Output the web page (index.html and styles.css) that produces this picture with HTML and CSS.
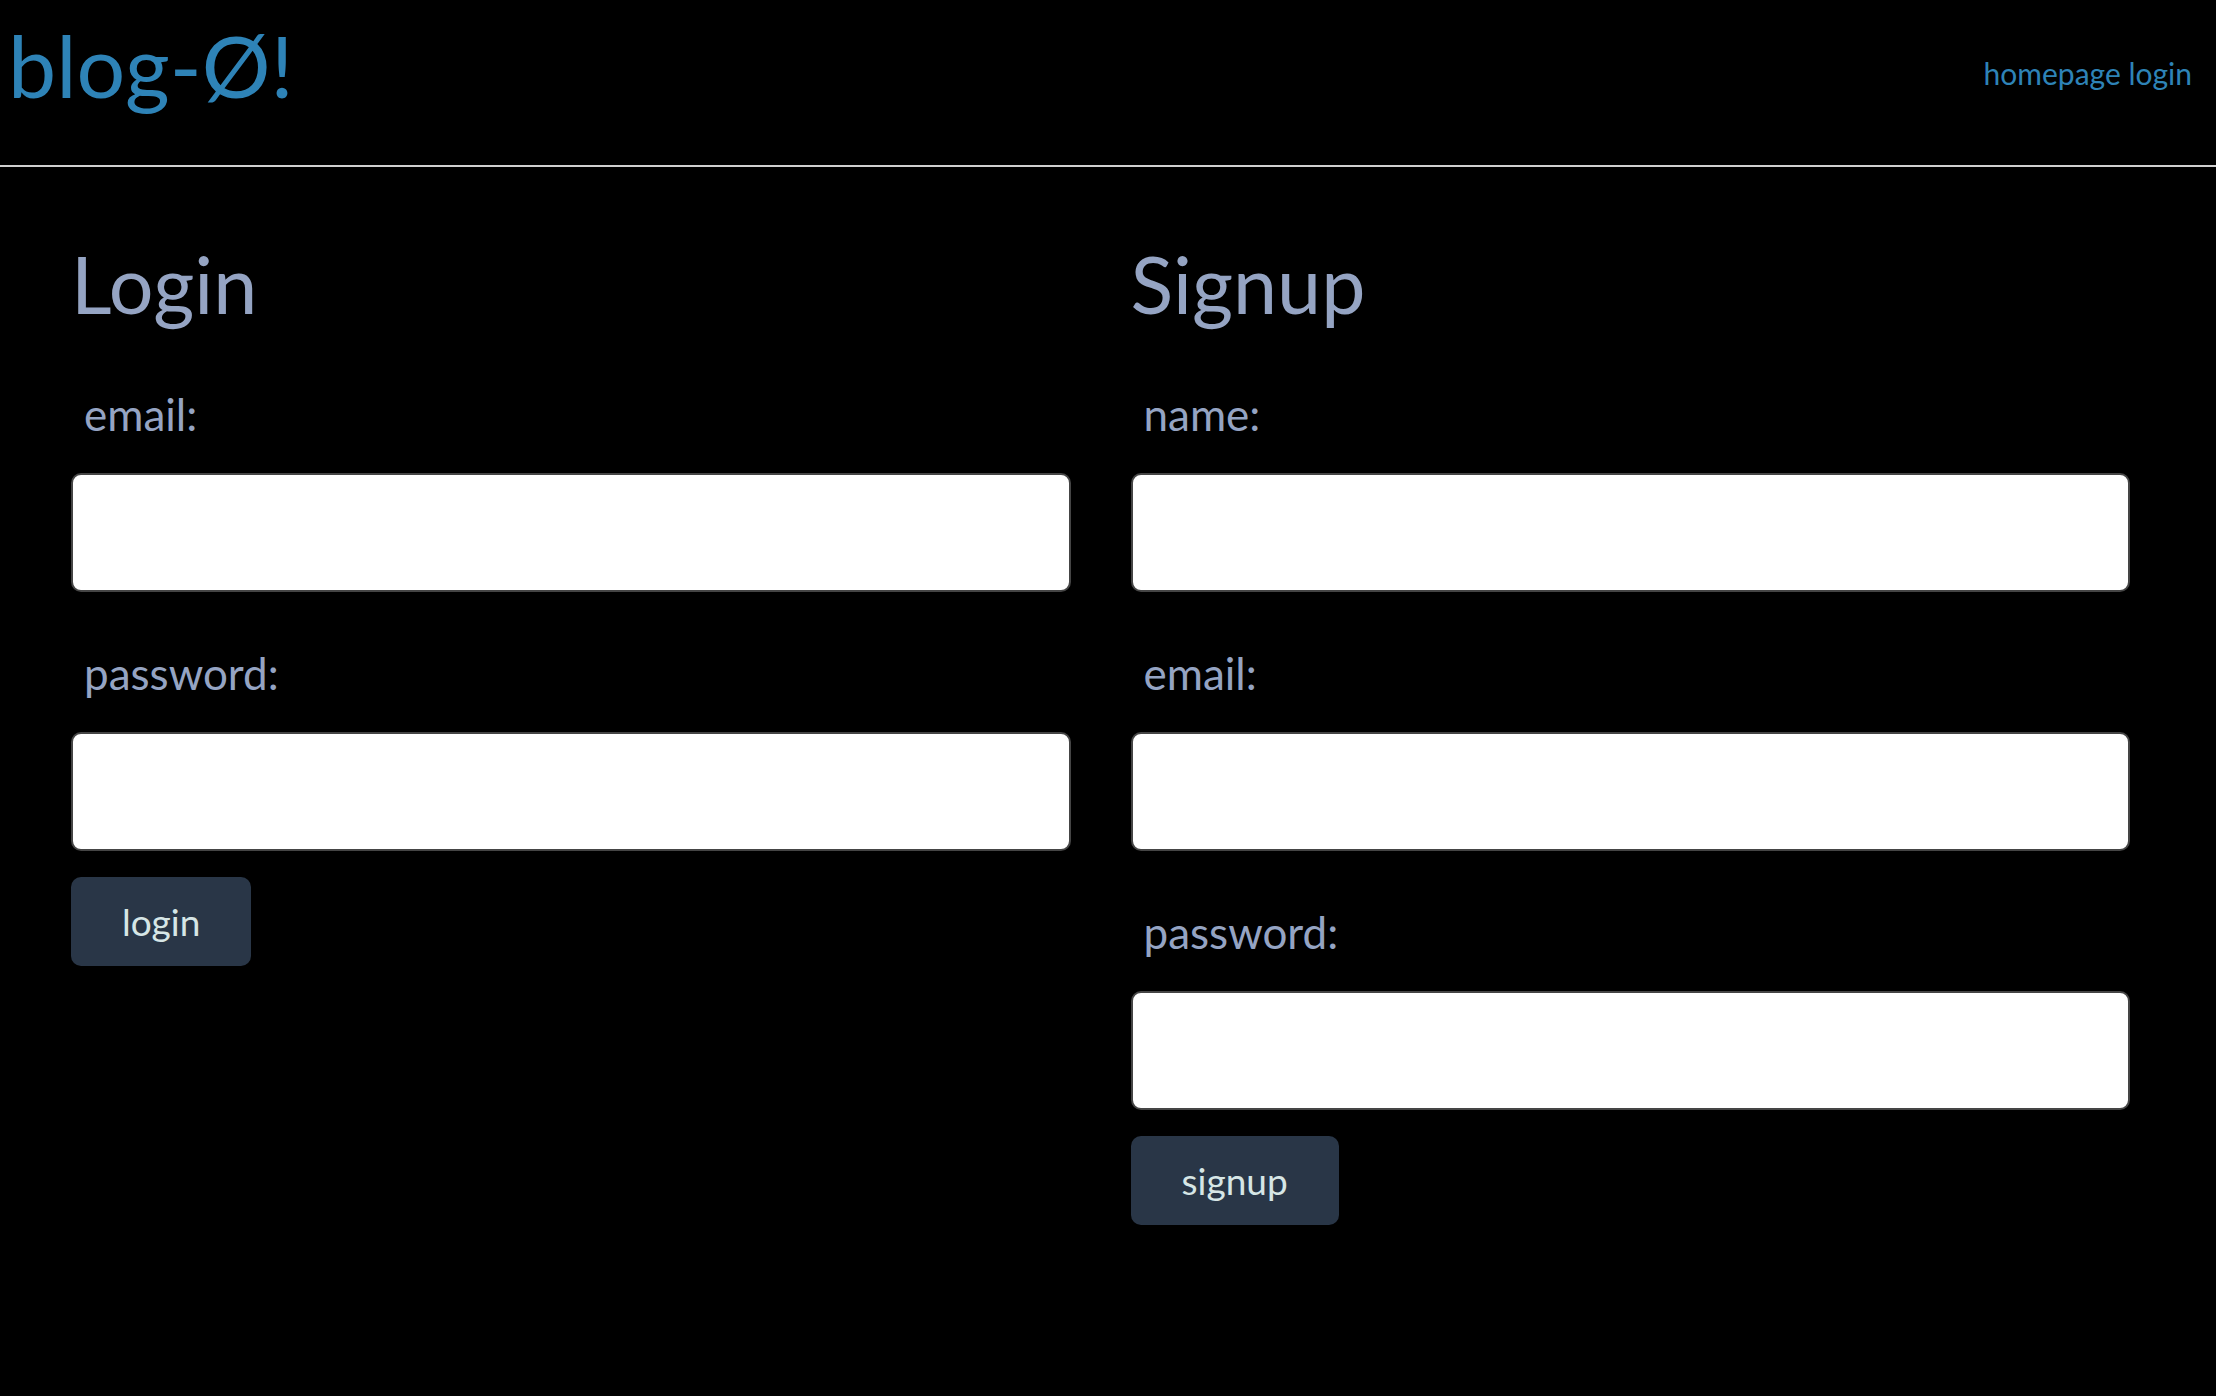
FILE: index.html
```html
<!DOCTYPE html>
<html lang="en">
<head>
<meta charset="utf-8">
<title>blog-Ø!</title>
<link rel="stylesheet" href="styles.css">
</head>
<body>
<header class="site-header">
  <a class="logo" href="#">blog-Ø!</a>
  <nav class="nav">
    <a href="#">homepage</a>
    <a href="#">login</a>
  </nav>
</header>
<main class="forms">
  <section class="panel">
    <h2 class="panel-title">Login</h2>
    <form class="form">
      <label class="field-label" for="login-email">email:</label>
      <input class="field-input" id="login-email" type="email">
      <label class="field-label" for="login-password">password:</label>
      <input class="field-input" id="login-password" type="password">
      <button class="btn" type="button">login</button>
    </form>
  </section>
  <section class="panel">
    <h2 class="panel-title">Signup</h2>
    <form class="form">
      <label class="field-label" for="signup-name">name:</label>
      <input class="field-input" id="signup-name" type="text">
      <label class="field-label" for="signup-email">email:</label>
      <input class="field-input" id="signup-email" type="email">
      <label class="field-label" for="signup-password">password:</label>
      <input class="field-input" id="signup-password" type="password">
      <button class="btn" type="button">signup</button>
    </form>
  </section>
</main>
</body>
</html>
```
FILE: styles.css
```css
* { box-sizing: border-box; }

html, body {
  margin: 0;
  padding: 0;
  background: #000;
  font-family: Lato, "Open Sans", sans-serif;
}

.site-header {
  display: flex;
  justify-content: space-between;
  align-items: flex-start;
  height: 167px;
  padding: 0 24px 0 8px;
  border-bottom: 2px solid #cfcfcf;
}

.logo {
  display: block;
  margin-top: 21px;
  font-size: 86px;
  line-height: 88px;
  color: #2e83b7;
  text-decoration: none;
}

.nav {
  margin-top: 57px;
  font-size: 30px;
  line-height: 32px;
}

.nav a {
  color: #2e83b7;
  text-decoration: none;
}

.forms {
  display: grid;
  grid-template-columns: 1fr 1fr;
  column-gap: 60px;
  padding: 0 86px 0 71px;
}

.panel-title {
  margin: 72px 0 0 0;
  font-size: 79px;
  line-height: 90px;
  font-weight: 400;
  color: #95a4c3;
}

.form {
  display: flex;
  flex-direction: column;
  align-items: flex-start;
}

.field-label {
  display: block;
  margin-top: 56px;
  padding-left: 13px;
  font-size: 44px;
  line-height: 50px;
  color: #95a4c3;
}

.form .field-label:first-child {
  margin-top: 60px;
}

.field-input {
  display: block;
  width: 100%;
  height: 119px;
  margin-top: 34px;
  border: 2px solid #454545;
  border-radius: 10px;
  background: #fff;
}

.btn {
  margin-top: 26px;
  height: 89px;
  padding: 0 51px;
  border: none;
  border-radius: 10px;
  background: #293647;
  color: #d6e6e6;
  font-family: Lato, "Open Sans", sans-serif;
  font-size: 37px;
}
```
